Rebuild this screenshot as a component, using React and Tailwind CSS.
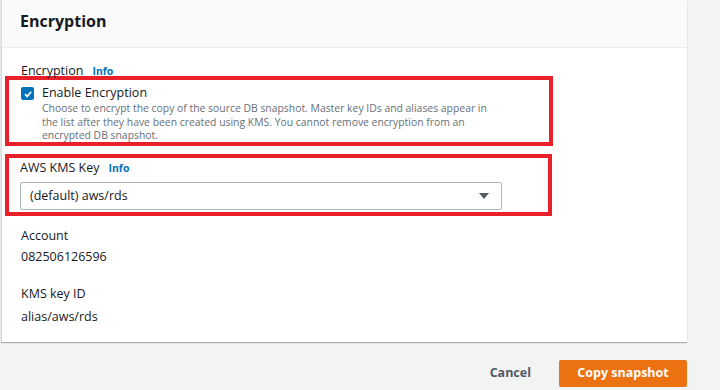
import React from "react";

const font = { fontFamily: '"Open Sans", "Noto Sans", Arial, sans-serif' };

function Info() {
  return <span className="ml-[9px] text-[10.5px] font-bold text-[#0073bb]">Info</span>;
}

export default function App() {
  return (
    <div className="w-[720px] h-[390px] bg-[#f2f3f3] overflow-hidden text-[#16191f]" style={font}>
      {/* PANEL */}
      <div className="ml-px w-[686px] bg-white border-l border-[#d5dbdb] shadow-[0_1px_1px_0_rgba(0,28,36,0.3)]">
        <div className="h-[48px] bg-[#fafafa] border-b border-[#eaeded] pl-[18px] pb-[6px] flex items-center">
          <h2 className="text-[16px] font-bold leading-none">Encryption</h2>
        </div>

        <div className="pl-[3px] pt-[17px] pb-[16px]">
          <div className="pl-[16px] text-[12.5px] leading-[12px]">
            Encryption
            <Info />
          </div>

          {/* ENABLE ENCRYPTION */}
          <div className="-mt-px w-[548px] h-[70px] border-[4px] border-[#e8202a] pl-[12px] pt-[4px] flex gap-[8px]">
            <div className="mt-[3px] w-[13px] h-[13px] rounded-[2px] bg-[#0073bb] flex items-center justify-center shrink-0">
              <svg width="10" height="10" viewBox="0 0 10 10">
                <path d="M2 5.2 L4.2 7.4 L8.2 2.8" stroke="white" strokeWidth="1.7" fill="none" />
              </svg>
            </div>
            <div>
              <div className="text-[12.5px] leading-[18px]">Enable Encryption</div>
              <p className="text-[10.4px] leading-[13.5px] text-[#687078] w-[490px]">
                Choose to encrypt the copy of the source DB snapshot. Master key IDs and aliases appear in
                <br />
                the list after they have been created using KMS. You cannot remove encryption from an
                <br />
                encrypted DB snapshot.
              </p>
            </div>
          </div>

          {/* KMS KEY */}
          <div className="mt-[8px] w-[547px] h-[62px] border-[4px] border-[#e8202a] pl-[11px] pt-px">
            <div className="text-[12.5px] leading-[18px]">
              AWS KMS Key
              <Info />
            </div>
            <div className="mt-[5px] w-[482px] h-[28px] border border-[#aab7b8] rounded-[2px] flex items-center justify-between pl-[9px] pr-[12px] text-[12.5px]">
              <span>(default) aws/rds</span>
              <svg width="10" height="7" viewBox="0 0 10 7">
                <path d="M0 0 H10 L5 6 Z" fill="#545b64" />
              </svg>
            </div>
          </div>

          <div className="pl-[16px] text-[12.5px] leading-[18px]">
            <div className="mt-[11px]">Account</div>
            <div className="mt-[3px]">082506126596</div>
            <div className="mt-[19px]">KMS key ID</div>
            <div className="mt-[5px]">alias/aws/rds</div>
          </div>
        </div>
      </div>

      {/* FOOTER */}
      <div className="w-[687px] mt-[18px] flex justify-end items-center gap-[28px]">
        <button className="text-[12.5px] font-bold text-[#545b64]">Cancel</button>
        <button className="w-[128px] h-[27px] bg-[#ec7211] rounded-[2px] text-white text-[12.5px] font-bold">
          Copy snapshot
        </button>
      </div>
    </div>
  );
}
